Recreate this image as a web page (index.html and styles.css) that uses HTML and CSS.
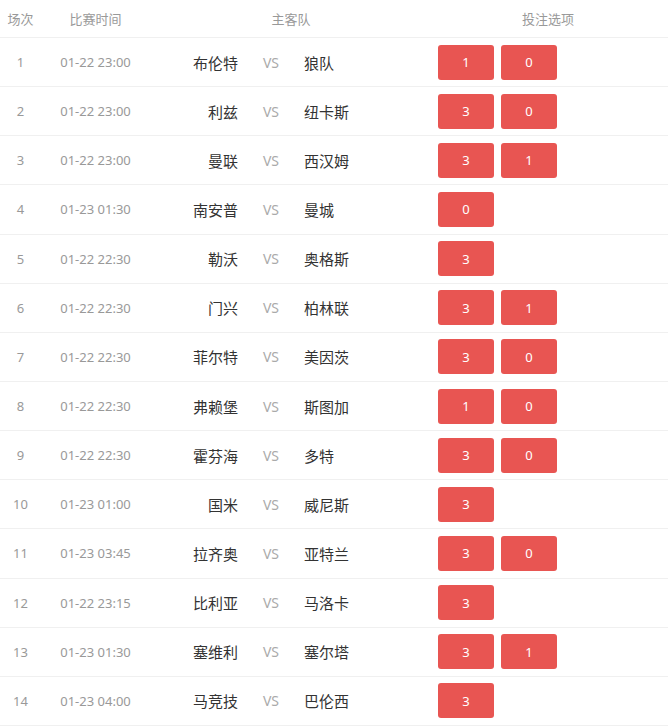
FILE: index.html
```html
<!DOCTYPE html>
<html lang="zh">
<head>
<meta charset="utf-8">
<title>投注</title>
<link rel="stylesheet" href="styles.css">
</head>
<body>
<div class="table">
  <div class="row head">
    <div class="c-no">场次</div>
    <div class="c-time">比赛时间</div>
    <div class="c-teams">主客队</div>
    <div class="c-bet">投注选项</div>
  </div>
  <div class="row"><div class="c-no">1</div><div class="c-time">01-22 23:00</div><div class="c-home">布伦特</div><div class="c-vs">VS</div><div class="c-away">狼队</div><div class="c-opts"><span class="btn">1</span><span class="btn">0</span></div></div>
  <div class="row"><div class="c-no">2</div><div class="c-time">01-22 23:00</div><div class="c-home">利兹</div><div class="c-vs">VS</div><div class="c-away">纽卡斯</div><div class="c-opts"><span class="btn">3</span><span class="btn">0</span></div></div>
  <div class="row"><div class="c-no">3</div><div class="c-time">01-22 23:00</div><div class="c-home">曼联</div><div class="c-vs">VS</div><div class="c-away">西汉姆</div><div class="c-opts"><span class="btn">3</span><span class="btn">1</span></div></div>
  <div class="row"><div class="c-no">4</div><div class="c-time">01-23 01:30</div><div class="c-home">南安普</div><div class="c-vs">VS</div><div class="c-away">曼城</div><div class="c-opts"><span class="btn">0</span></div></div>
  <div class="row"><div class="c-no">5</div><div class="c-time">01-22 22:30</div><div class="c-home">勒沃</div><div class="c-vs">VS</div><div class="c-away">奥格斯</div><div class="c-opts"><span class="btn">3</span></div></div>
  <div class="row"><div class="c-no">6</div><div class="c-time">01-22 22:30</div><div class="c-home">门兴</div><div class="c-vs">VS</div><div class="c-away">柏林联</div><div class="c-opts"><span class="btn">3</span><span class="btn">1</span></div></div>
  <div class="row"><div class="c-no">7</div><div class="c-time">01-22 22:30</div><div class="c-home">菲尔特</div><div class="c-vs">VS</div><div class="c-away">美因茨</div><div class="c-opts"><span class="btn">3</span><span class="btn">0</span></div></div>
  <div class="row"><div class="c-no">8</div><div class="c-time">01-22 22:30</div><div class="c-home">弗赖堡</div><div class="c-vs">VS</div><div class="c-away">斯图加</div><div class="c-opts"><span class="btn">1</span><span class="btn">0</span></div></div>
  <div class="row"><div class="c-no">9</div><div class="c-time">01-22 22:30</div><div class="c-home">霍芬海</div><div class="c-vs">VS</div><div class="c-away">多特</div><div class="c-opts"><span class="btn">3</span><span class="btn">0</span></div></div>
  <div class="row"><div class="c-no">10</div><div class="c-time">01-23 01:00</div><div class="c-home">国米</div><div class="c-vs">VS</div><div class="c-away">威尼斯</div><div class="c-opts"><span class="btn">3</span></div></div>
  <div class="row"><div class="c-no">11</div><div class="c-time">01-23 03:45</div><div class="c-home">拉齐奥</div><div class="c-vs">VS</div><div class="c-away">亚特兰</div><div class="c-opts"><span class="btn">3</span><span class="btn">0</span></div></div>
  <div class="row"><div class="c-no">12</div><div class="c-time">01-22 23:15</div><div class="c-home">比利亚</div><div class="c-vs">VS</div><div class="c-away">马洛卡</div><div class="c-opts"><span class="btn">3</span></div></div>
  <div class="row"><div class="c-no">13</div><div class="c-time">01-23 01:30</div><div class="c-home">塞维利</div><div class="c-vs">VS</div><div class="c-away">塞尔塔</div><div class="c-opts"><span class="btn">3</span><span class="btn">1</span></div></div>
  <div class="row"><div class="c-no">14</div><div class="c-time">01-23 04:00</div><div class="c-home">马竞技</div><div class="c-vs">VS</div><div class="c-away">巴伦西</div><div class="c-opts"><span class="btn">3</span></div></div>
</div>
</body>
</html>
```

FILE: styles.css
```css
html, body {
  margin: 0;
  padding: 0;
  background: #fff;
}
body {
  font-family: "Noto Sans", "Noto Sans CJK SC", sans-serif;
  color: #333;
}
.table {
  width: 668px;
}
.row {
  display: grid;
  grid-template-columns: 41px 109px 88px 66px 134px 1fr;
  align-items: center;
  height: 48.15px;
  border-bottom: 1px solid #f0f0f0;
}
.row.head {
  height: 37px;
  font-size: 13px;
  color: #999;
}
.head .c-teams {
  grid-column: 3 / 6;
  text-align: center;
  padding-right: 6px;
}
.head .c-bet {
  text-align: center;
  padding-right: 10px;
}
.c-no {
  text-align: center;
  font-size: 13px;
  color: #999;
}
.c-time {
  text-align: center;
  font-size: 13px;
  color: #999;
}
.c-home {
  text-align: right;
  font-size: 15px;
  color: #333;
}
.c-vs {
  text-align: center;
  font-size: 14px;
  color: #aaa;
}
.c-away {
  text-align: left;
  font-size: 15px;
  color: #333;
}
.c-opts {
  display: flex;
  gap: 7px;
}
.btn {
  width: 56px;
  height: 35px;
  border-radius: 3px;
  background: #e85552;
  color: #fff;
  font-size: 13px;
  display: flex;
  align-items: center;
  justify-content: center;
}
```
